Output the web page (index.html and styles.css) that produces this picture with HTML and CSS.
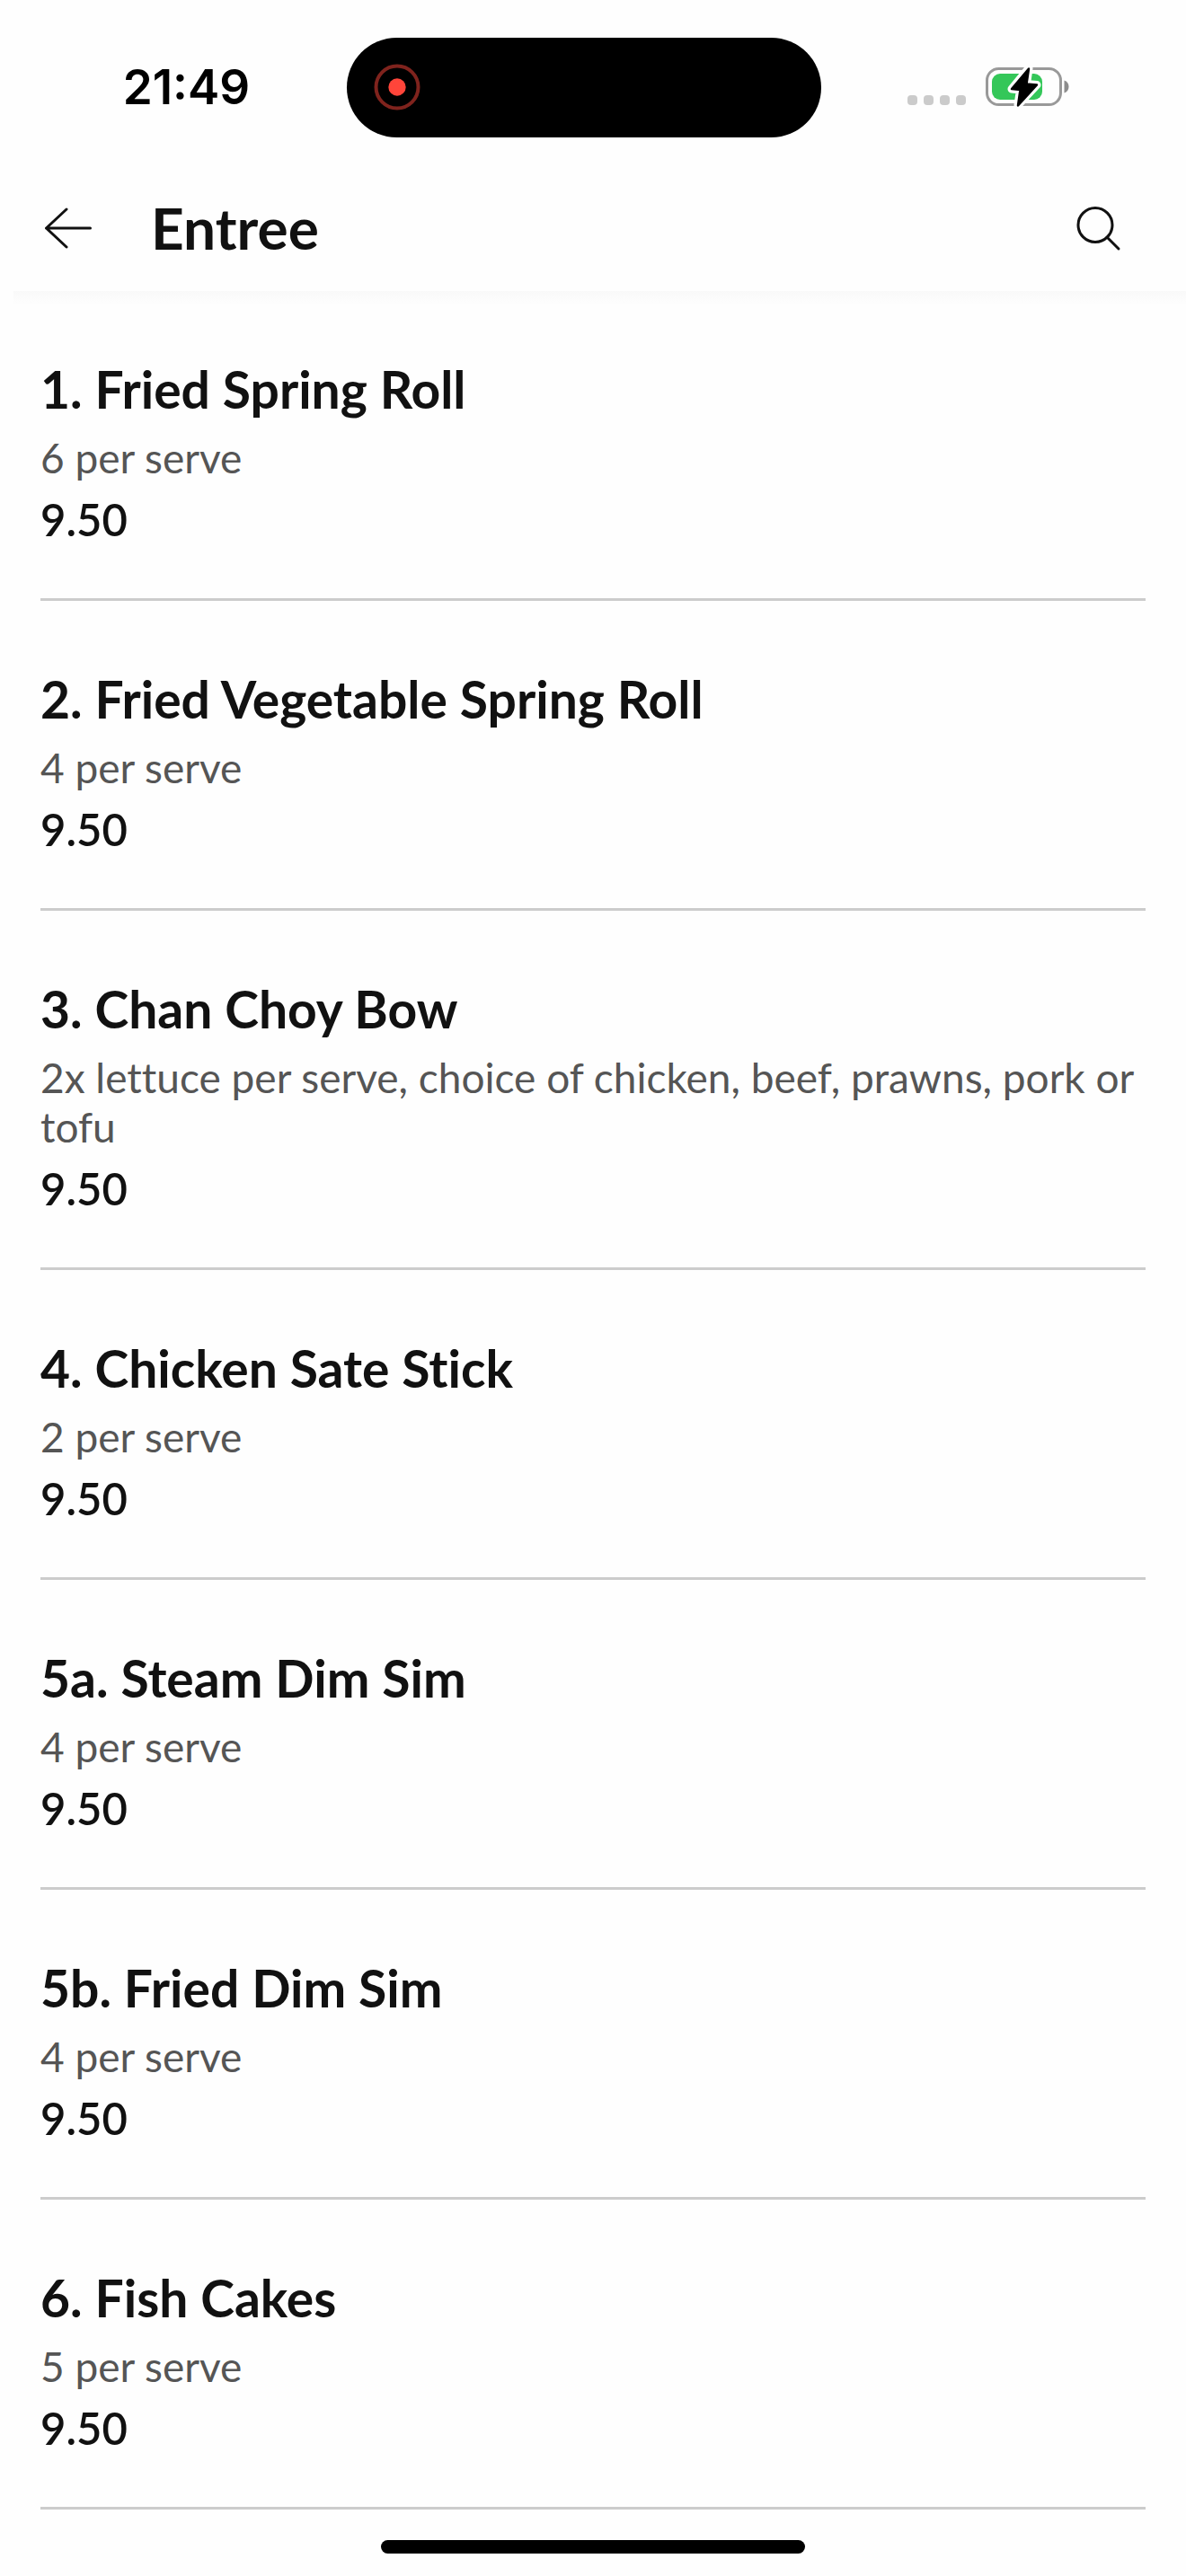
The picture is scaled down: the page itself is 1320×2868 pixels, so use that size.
FILE: index.html
```html
<!DOCTYPE html>
<html lang="en">
	<head>
		<meta charset="utf-8">
		<meta name="viewport" content="width=device-width, initial-scale=1">
		<title>Entree</title>
		<link rel="stylesheet" href="styles.css">
	</head>
	<body>
		<div class="status-bar">
			<time class="clock">21:49</time>
			<div class="island">
				<svg class="record" viewBox="0 0 52 52" aria-hidden="true">
					<circle cx="26" cy="26" r="23.5" fill="none" stroke="#7f231d" stroke-width="4"/>
					<circle cx="26" cy="26" r="9.7" fill="#ff453a"/>
				</svg>
			</div>
			<div class="status-icons">
				<div class="signal"><i></i><i></i><i></i><i></i></div>
				<svg class="battery" viewBox="0 0 96 46" aria-hidden="true">
					<rect x="3.5" y="2.5" width="82" height="40" rx="13" fill="none" stroke="#999" stroke-width="3"/>
					<path d="M89.500 15.500c3 1 5 3.500 5 7s-2 6-5 7z" fill="#8c8c8c"/>
					<rect x="9" y="8" width="56" height="29" rx="9" fill="#34c759"/>
					<path d="M50 2 L31 25 L40.500 26 L38 43 L59 20.500 L47.500 19.500z" fill="#fff" stroke="#fff" stroke-width="9" stroke-linejoin="round"/>
					<path d="M50 2.500 L31 25 L40.500 26 L38 43.500 L59 20.500 L47.500 19.500z" stroke="#000" stroke-width="2.500" stroke-linejoin="round"/>
				</svg>
			</div>
		</div>
		<header class="nav-bar">
			<button class="icon-btn" type="button" aria-label="Back">
				<svg viewBox="0 0 52 52"><path d="M24 5L1.500 26L24 47M1.500 26H50.500"/></svg>
			</button>
			<h1>Entree</h1>
			<button class="icon-btn" type="button" aria-label="Search">
				<svg viewBox="0 0 52 52"><circle cx="23" cy="22.500" r="19"/><path d="M36 36L49 49"/></svg>
			</button>
		</header>
		<main>
			<ul class="menu">
				<li>
					<h2>1. Fried Spring Roll</h2>
					<p class="desc">6 per serve</p>
					<p class="price">9.50</p>
				</li>
				<li>
					<h2>2. Fried Vegetable Spring Roll</h2>
					<p class="desc">4 per serve</p>
					<p class="price">9.50</p>
				</li>
				<li>
					<h2>3. Chan Choy Bow</h2>
					<p class="desc">2x lettuce per serve, choice of chicken, beef, prawns, pork or tofu</p>
					<p class="price">9.50</p>
				</li>
				<li>
					<h2>4. Chicken Sate Stick</h2>
					<p class="desc">2 per serve</p>
					<p class="price">9.50</p>
				</li>
				<li>
					<h2>5a. Steam Dim Sim</h2>
					<p class="desc">4 per serve</p>
					<p class="price">9.50</p>
				</li>
				<li>
					<h2>5b. Fried Dim Sim</h2>
					<p class="desc">4 per serve</p>
					<p class="price">9.50</p>
				</li>
				<li>
					<h2>6. Fish Cakes</h2>
					<p class="desc">5 per serve</p>
					<p class="price">9.50</p>
				</li>
			</ul>
		</main>
		<div class="home-bar"></div>
	</body>
</html>
```

FILE: styles.css
```css
*{ box-sizing: border-box; }
body{ margin: 0; background: #fefefe; color: #111; font-family: Lato, "Liberation Sans", sans-serif; font-variant-ligatures: none; }
h1,h2,p,ul{ margin: 0; padding: 0; }

/* status bar */
.status-bar{ display: grid; grid-template-columns: 19fr 26fr 20fr; align-items: center; height: 194px; }
.clock{ padding-left: 29px; color: #000; font: 600 53px/60px Inter, "Liberation Sans", sans-serif; text-align: center; }
.island{ display: flex; align-items: center; height: 111px; padding-left: 30px; border-radius: 56px; background: #000; }
.record{ width: 52px; height: 52px; }
.status-icons{ display: flex; align-items: center; gap: 20px; padding-left: 96px; }
.signal{ display: flex; gap: 7px; padding-top: 28px; }
.signal i{ width: 11px; height: 11px; border-radius: 4px; background: #cbcbcb; }
.battery{ width: 96px; height: 46px; }

/* title bar */
.nav-bar{ display: flex; align-items: center; height: 130px; padding: 0 72px 10px 50px; }
.nav-bar h1{ flex: 1; padding-left: 66px; font-size: 64px; line-height: 76px; font-weight: 700; }
.icon-btn{ width: 52px; height: 52px; padding: 0; border: 0; background: none; cursor: pointer; }
.icon-btn svg{ display: block; width: 52px; height: 52px; fill: none; stroke: #111; stroke-width: 3; stroke-linecap: round; stroke-linejoin: round; }

/* dishes, with the soft shade under the title bar */
main{ margin-left: 15px; background: linear-gradient(#f9f9f9, #fefefe 16px); }
.menu{ padding: 0 45px 0 30px; list-style: none; }
.menu li{ padding: 74px 0 59px; border-bottom: 3px solid #ccc; }
.menu h2{ font-size: 57px; line-height: 70px; font-weight: 700; }
.desc{ margin: 14px 0 12px; color: #555; font-size: 46px; line-height: 55px; }
.price{ font-size: 49px; line-height: 58px; font-weight: 600; }

.home-bar{ width: 472px; height: 15px; margin: 34px auto 24px; border-radius: 8px; background: #000; }
```
